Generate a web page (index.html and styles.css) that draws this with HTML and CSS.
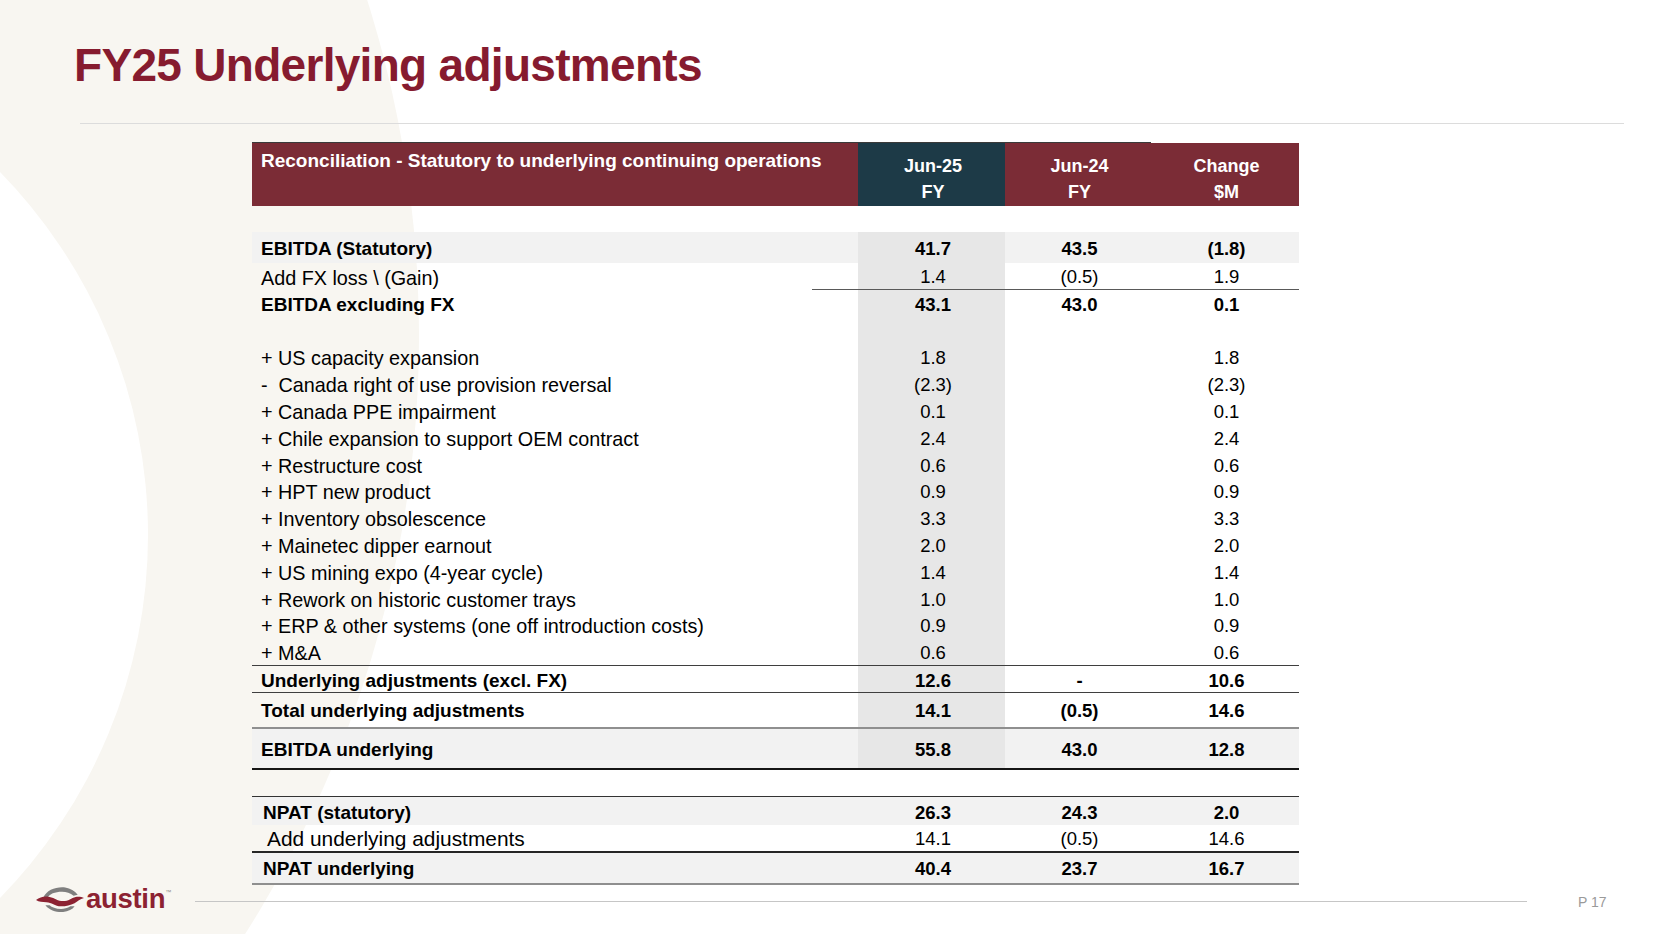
FILE: index.html
```html
<!DOCTYPE html>
<html lang="en">
<head>
<meta charset="utf-8">
<title>FY25 Underlying adjustments</title>
<link rel="stylesheet" href="styles.css">
</head>
<body>
<div class="slide">
  <svg class="bg" width="1670" height="934" viewBox="0 0 1670 934" aria-hidden="true">
    <circle cx="-696" cy="336" r="1115" fill="#f8f6f1"/>
    <circle cx="-371" cy="535" r="519" fill="#ffffff"/>
  </svg>

  <h1 class="title">FY25 Underlying adjustments</h1>
  <div class="rule"></div>

  <div class="recon">
    <div class="row head">
      <div class="hc hl">Reconciliation - Statutory to underlying continuing operations</div>
      <div class="hc hn cur">Jun-25<br>FY</div>
      <div class="hc hn">Jun-24<br>FY</div>
      <div class="hc hn chg">Change<br>$M</div>
    </div>

    <div class="row sp1"><div class="c"></div><div class="c"></div><div class="c"></div><div class="c"></div></div>

    <div class="row r-e band bold">
      <div class="c l">EBITDA (Statutory)</div><div class="c n">41.7</div><div class="c n">43.5</div><div class="c n">(1.8)</div>
    </div>
    <div class="row r-fx band">
      <div class="c l">Add FX loss \ (Gain)</div><div class="c n">1.4</div><div class="c n">(0.5)</div><div class="c n">1.9</div>
    </div>
    <div class="row r-x band bold">
      <div class="c l">EBITDA excluding FX</div><div class="c n">43.1</div><div class="c n">43.0</div><div class="c n">0.1</div>
    </div>

    <div class="row sp2 band"><div class="c"></div><div class="c"></div><div class="c"></div><div class="c"></div></div>

    <div class="row it band"><div class="c l">+ US capacity expansion</div><div class="c n">1.8</div><div class="c n"></div><div class="c n">1.8</div></div>
    <div class="row it band"><div class="c l">-  Canada right of use provision reversal</div><div class="c n">(2.3)</div><div class="c n"></div><div class="c n">(2.3)</div></div>
    <div class="row it band"><div class="c l">+ Canada PPE impairment</div><div class="c n">0.1</div><div class="c n"></div><div class="c n">0.1</div></div>
    <div class="row it band"><div class="c l">+ Chile expansion to support OEM contract</div><div class="c n">2.4</div><div class="c n"></div><div class="c n">2.4</div></div>
    <div class="row it band"><div class="c l">+ Restructure cost</div><div class="c n">0.6</div><div class="c n"></div><div class="c n">0.6</div></div>
    <div class="row it band"><div class="c l">+ HPT new product</div><div class="c n">0.9</div><div class="c n"></div><div class="c n">0.9</div></div>
    <div class="row it band"><div class="c l">+ Inventory obsolescence</div><div class="c n">3.3</div><div class="c n"></div><div class="c n">3.3</div></div>
    <div class="row it band"><div class="c l">+ Mainetec dipper earnout</div><div class="c n">2.0</div><div class="c n"></div><div class="c n">2.0</div></div>
    <div class="row it band"><div class="c l">+ US mining expo (4-year cycle)</div><div class="c n">1.4</div><div class="c n"></div><div class="c n">1.4</div></div>
    <div class="row it band"><div class="c l">+ Rework on historic customer trays</div><div class="c n">1.0</div><div class="c n"></div><div class="c n">1.0</div></div>
    <div class="row it band"><div class="c l">+ ERP &amp; other systems (one off introduction costs)</div><div class="c n">0.9</div><div class="c n"></div><div class="c n">0.9</div></div>
    <div class="row it last band"><div class="c l">+ M&amp;A</div><div class="c n">0.6</div><div class="c n"></div><div class="c n">0.6</div></div>

    <div class="row r-ua band bold">
      <div class="c l">Underlying adjustments (excl. FX)</div><div class="c n">12.6</div><div class="c n">-</div><div class="c n">10.6</div>
    </div>
    <div class="row r-tot band bold">
      <div class="c l">Total underlying adjustments</div><div class="c n">14.1</div><div class="c n">(0.5)</div><div class="c n">14.6</div>
    </div>
    <div class="row r-eu band bold">
      <div class="c l">EBITDA underlying</div><div class="c n">55.8</div><div class="c n">43.0</div><div class="c n">12.8</div>
    </div>

    <div class="row sp3"><div class="c"></div><div class="c"></div><div class="c"></div><div class="c"></div></div>

    <div class="row r-ns bold">
      <div class="c l np">NPAT (statutory)</div><div class="c n">26.3</div><div class="c n">24.3</div><div class="c n">2.0</div>
    </div>
    <div class="row r-na">
      <div class="c l na">Add underlying adjustments</div><div class="c n">14.1</div><div class="c n">(0.5)</div><div class="c n">14.6</div>
    </div>
    <div class="row r-nu bold">
      <div class="c l np">NPAT underlying</div><div class="c n">40.4</div><div class="c n">23.7</div><div class="c n">16.7</div>
    </div>
  </div>

  <footer class="foot">
    <div class="logo">
      <svg class="mark" width="48" height="28" viewBox="0 0 46 26" aria-hidden="true">
        <path d="M7 12 C10 4 20 1 28 2 C33 3 37 5 40 9 L36 10 C33 7 29 6 25 6 C18 6 13 8 11 12 Z" fill="#7f7f7f"/>
        <path d="M0 14 C4 11 8 10 13 11 C18 12 21 15 26 15 C31 15 34 12 38 11 C41 10.5 44 11 46 12 C42 13 40 15 37 17 C33 19 29 20 24 20 C18 20 15 16 10 16 C6 16 3 16 0 14 Z" fill="#8c2232"/>
        <path d="M9 19 C13 24 20 26 26 25.5 C31 25 35 23 37 20 L33 20 C30 22 27 22.5 24 22.5 C19 22.5 15 21 13 19 Z" fill="#7f7f7f"/>
      </svg>
      <span class="word">austin</span><span class="tm">™</span>
    </div>
    <div class="fline"></div>
    <div class="pg">P 17</div>
  </footer>
</div>
</body>
</html>
```

FILE: styles.css
```css
* { box-sizing: border-box; }

html, body {
  margin: 0;
  padding: 0;
  background: #ffffff;
}

.slide {
  position: relative;
  z-index: 0;
  width: 1670px;
  height: 934px;
  overflow: hidden;
  display: flex;
  flex-direction: column;
  align-items: flex-start;
  font-family: "Liberation Sans", Arial, sans-serif;
  color: #000;
  background: #ffffff;
}

.bg {
  position: absolute;
  left: 0;
  top: 0;
  z-index: -1;
}

.title {
  margin: 42px 0 0 74px;
  font-size: 46px;
  line-height: 46px;
  font-weight: 700;
  letter-spacing: -0.7px;
  color: #861b2f;
}

.rule {
  margin: 35px 0 0 80px;
  width: 1544px;
  height: 1px;
  background: #dcdcdc;
}

/* ---------- table ---------- */
.recon {
  margin: 18px 0 0 252px;
  width: 1047px;
}

.row {
  display: grid;
  grid-template-columns: 606px 147px 146px 148px;
  height: var(--h);
}

.c {
  display: flex;
  align-items: flex-end;
  padding-bottom: var(--pb, 0px);
  font-size: 19.8px;
  line-height: 20px;
  white-space: pre;
}

.bold > .c { font-size: 19px; }

.c.l { padding-left: 9px; }
.c.np { padding-left: 11px; }
.c.na { padding-left: 15px; font-size: 20.9px; }

.c.n,
.bold > .c.n {
  justify-content: center;
  padding-left: 3px;
  font-size: 18.5px;
}

.bold { font-weight: 700; }

/* header */
.head { --h: 64px; }

.hc {
  color: #ffffff;
  font-weight: 700;
  background: #7b2c36;
  border-top: 1px solid #3a3a3a;
  background-clip: padding-box;
}

.hl {
  padding: 7px 0 0 9px;
  font-size: 19px;
  line-height: 22px;
}

.hn {
  padding: 11px 0 0 3px;
  font-size: 18px;
  line-height: 25.7px;
  text-align: center;
}

.hn.cur { background-color: #1d3a47; }
.hn.chg { border-top-color: #ffffff; }

/* Jun-25 shaded column */
.band > .c:nth-child(2) { background: #e7e7e7; }

/* row geometry */
.sp1 { --h: 26px; }

.r-e { --h: 31px; --pb: 4px; background: #f2f2f2; }

.r-fx { --h: 27px; --pb: 1.6px; }
.r-fx > .c.n { border-bottom: 1px solid #595959; }
.r-fx > .c.l {
  background: linear-gradient(#595959, #595959) right bottom / 46px 1px no-repeat;
}

.r-x { --h: 27px; --pb: 1.9px; }

.sp2 { --h: 27px; }

.it { --h: 26.8px; --pb: 2.4px; }
.it.last { --h: 27.2px; --pb: 1.6px; border-bottom: 1px solid #3f3f3f; }

.r-ua { --h: 27px; --pb: 0.9px; border-bottom: 1px solid #3f3f3f; }

.r-tot { --h: 36px; --pb: 6.3px; border-bottom: 2px solid #8f8f8f; }

.r-eu { --h: 41px; --pb: 7.9px; border-bottom: 2px solid #151515; background: #f2f2f2; }

.sp3 { --h: 26px; }

.r-ns { --h: 29px; --pb: 1.6px; border-top: 1px solid #333333; background: #f2f2f2; }

.r-na { --h: 28px; --pb: 1.6px; border-bottom: 2px solid #262626; }

.r-nu { --h: 32px; --pb: 3.6px; border-bottom: 2px solid #8f8f8f; background: #f2f2f2; }

/* ---------- footer ---------- */
.foot {
  display: flex;
  align-items: center;
  height: 28px;
  padding-left: 36px;
}

.logo {
  display: flex;
  align-items: center;
  width: 131px;
  height: 28px;
}

.mark { flex: none; }

.word {
  margin-left: 2px;
  font-size: 27.5px;
  line-height: 26px;
  font-weight: 700;
  color: #8c2232;
  letter-spacing: -0.3px;
}

.tm {
  align-self: flex-start;
  margin-top: 4px;
  font-size: 6px;
  line-height: 6px;
  color: #8a8a8a;
}

.fline {
  margin: 5px 0 0 28px;
  width: 1332px;
  height: 1px;
  background: #c6c6c6;
}

.pg {
  margin: 6px 0 0 51px;
  font-size: 14px;
  line-height: 16px;
  color: #9a9a9a;
}
```
